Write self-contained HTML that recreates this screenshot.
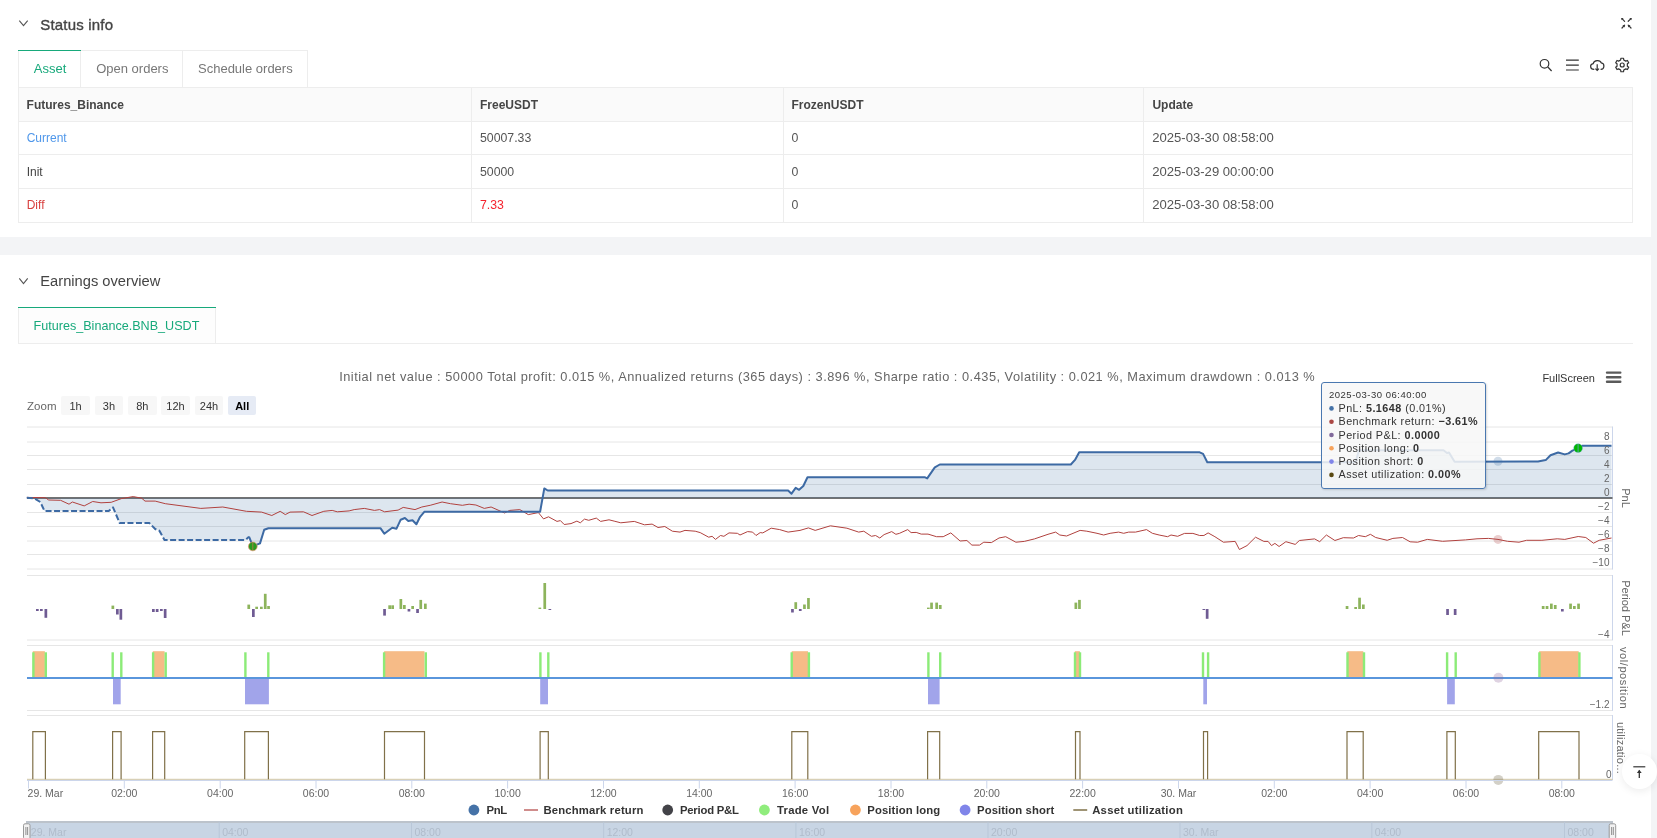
<!DOCTYPE html><html><head><meta charset="utf-8"><style>
html,body{margin:0;padding:0;width:1657px;height:838px;overflow:hidden;background:#fff;}
body{position:relative;font-family:"Liberation Sans", sans-serif;}
.abs{position:absolute;}
.t{position:absolute;white-space:nowrap;line-height:1;font-family:"Liberation Sans", sans-serif;}
b{font-weight:700}
</style></head><body><div style="position:absolute;left:0;top:0;width:1657px;height:838px;will-change:transform">
<svg class="abs" style="left:0;top:0" width="1657" height="838"><path d="M19.3 20.6 L23.5 25.6 L27.7 20.6" fill="none" stroke="#555" stroke-width="1.1"/><path d="M19.3 278.3 L23.5 283.6 L27.7 278.3" fill="none" stroke="#555" stroke-width="1.1"/><g stroke="#333" stroke-width="1.2" fill="none" stroke-linecap="round"><path d="M1622 18.6 L1624.6 21.3"/><path d="M1631 18.6 L1628.2 21.3"/><path d="M1622 28 L1624.6 25.2"/><path d="M1631 28 L1628.2 25.2"/></g><g fill="#333"><path d="M1621.3 18 L1623.6 18.2 L1621.5 20.3Z"/><path d="M1631.6 18 L1629.3 18.2 L1631.4 20.3Z"/><path d="M1624.9 25 L1622.4 25.3 L1624.7 27.6Z"/><path d="M1628 25 L1630.5 25.3 L1628.2 27.6Z"/></g><g stroke="#333" stroke-width="1.2" fill="none"><circle cx="1544.5" cy="63.8" r="4.3"/><path d="M1547.8 67 L1551.6 71"/><path d="M1566 60.1 H1578.8 M1566 65.1 H1578.8 M1566 70 H1578.8" stroke-width="1.1"/><path d="M1594.3 69.4 C1589.6 69.6 1589.6 64 1593.2 63.6 C1594 59.8 1600.2 59.6 1601.2 62.8 C1605 63.2 1604.8 69.6 1600.6 69.4"/><path d="M1597.2 64.2 V70.4 M1595.4 68.6 L1597.2 70.4 L1599 68.6"/><path d="M1620.65 59.93 L1620.88 58.23 L1623.52 58.23 L1623.75 59.93 L1625.81 61.12 L1627.41 60.47 L1628.72 62.75 L1627.36 63.81 L1627.36 66.19 L1628.72 67.25 L1627.41 69.53 L1625.81 68.88 L1623.75 70.07 L1623.52 71.77 L1620.88 71.77 L1620.65 70.07 L1618.59 68.88 L1616.99 69.53 L1615.68 67.25 L1617.04 66.19 L1617.04 63.81 L1615.68 62.75 L1616.99 60.47 L1618.59 61.12Z" stroke-linejoin="round"/><circle cx="1622.2" cy="65" r="2"/></g></svg><div class="t" style="left:40.2px;top:17.30px;font-size:15px;color:#444;font-weight:400;letter-spacing:0.2px;-webkit-text-stroke:0.35px #444;">Status info</div>
<div class="abs" style="left:18px;top:50px;width:289.5px;height:37px;border:1px solid #ededed;border-bottom:none;box-sizing:border-box;background:#fff"></div><div class="abs" style="left:80px;top:50px;width:1px;height:37px;background:#ededed"></div><div class="abs" style="left:182px;top:50px;width:1px;height:37px;background:#ededed"></div><div class="abs" style="left:18px;top:49.5px;width:62.5px;height:1.6px;background:#17a97b"></div><div class="t" style="left:33.8px;top:61.70px;font-size:13px;color:#17a97b;font-weight:400;">Asset</div>
<div class="t" style="left:96.2px;top:61.70px;font-size:13px;color:#777;font-weight:400;">Open orders</div>
<div class="t" style="left:198px;top:61.70px;font-size:13px;color:#777;font-weight:400;">Schedule orders</div>
<div class="abs" style="left:18px;top:87px;width:1615px;height:136px;border:1px solid #ededed;box-sizing:border-box"></div><div class="abs" style="left:19px;top:88px;width:1613px;height:33px;background:#fafafa"></div><div class="abs" style="left:18px;top:121px;width:1615px;height:1px;background:#ededed"></div><div class="abs" style="left:18px;top:154px;width:1615px;height:1px;background:#ededed"></div><div class="abs" style="left:18px;top:188px;width:1615px;height:1px;background:#ededed"></div><div class="abs" style="left:471px;top:87px;width:1px;height:136px;background:#ededed"></div><div class="abs" style="left:783px;top:87px;width:1px;height:136px;background:#ededed"></div><div class="abs" style="left:1143px;top:87px;width:1px;height:136px;background:#ededed"></div><div class="t" style="left:26.6px;top:98.54px;font-size:12px;color:#464646;font-weight:700;">Futures_Binance</div>
<div class="t" style="left:480px;top:98.54px;font-size:12px;color:#464646;font-weight:700;">FreeUSDT</div>
<div class="t" style="left:791.5px;top:98.54px;font-size:12px;color:#464646;font-weight:700;">FrozenUSDT</div>
<div class="t" style="left:1152.4px;top:98.54px;font-size:12px;color:#464646;font-weight:700;">Update</div>
<div class="t" style="left:26.7px;top:131.84px;font-size:12px;color:#4f97ea;font-weight:400;">Current</div>
<div class="t" style="left:480px;top:131.59px;font-size:12.3px;color:#555;font-weight:400;">50007.33</div>
<div class="t" style="left:791.5px;top:131.59px;font-size:12.3px;color:#555;font-weight:400;">0</div>
<div class="t" style="left:1152.2px;top:130.91px;font-size:13.1px;color:#555;font-weight:400;">2025-03-30 08:58:00</div>
<div class="t" style="left:26.7px;top:165.84px;font-size:12px;color:#444;font-weight:400;">Init</div>
<div class="t" style="left:480px;top:165.59px;font-size:12.3px;color:#555;font-weight:400;">50000</div>
<div class="t" style="left:791.5px;top:165.59px;font-size:12.3px;color:#555;font-weight:400;">0</div>
<div class="t" style="left:1152.2px;top:164.91px;font-size:13.1px;color:#555;font-weight:400;">2025-03-29 00:00:00</div>
<div class="t" style="left:26.7px;top:198.64px;font-size:12px;color:#d8403f;font-weight:400;">Diff</div>
<div class="t" style="left:480px;top:199.19px;font-size:12.3px;color:#f5222d;font-weight:400;">7.33</div>
<div class="t" style="left:791.5px;top:199.19px;font-size:12.3px;color:#555;font-weight:400;">0</div>
<div class="t" style="left:1152.2px;top:197.71px;font-size:13.1px;color:#555;font-weight:400;">2025-03-30 08:58:00</div>
<div class="abs" style="left:0;top:237px;width:1657px;height:18px;background:#f3f4f6"></div><div class="abs" style="left:1651px;top:0;width:6px;height:838px;background:#f3f4f6"></div><div class="t" style="left:40.3px;top:274.36px;font-size:14.7px;color:#444;font-weight:400;">Earnings overview</div>
<div class="abs" style="left:18px;top:343px;width:1615px;height:1px;background:#ededed"></div><div class="abs" style="left:18px;top:307px;width:198px;height:36px;border:1px solid #ededed;border-top:none;border-bottom:none;box-sizing:border-box;background:#fdfdfd"></div><div class="abs" style="left:18px;top:306.7px;width:197.5px;height:1.6px;background:#17a97b"></div><div class="t" style="left:33.5px;top:320.33px;font-size:12.6px;color:#17a97b;font-weight:400;">Futures_Binance.BNB_USDT</div>
<svg class="abs" style="left:0;top:0" width="1657" height="838" shape-rendering="auto"><line x1="27" x2="1612.5" y1="427" y2="427" stroke="#e6e6e6" stroke-width="1"/><line x1="27" x2="1612.5" y1="442" y2="442" stroke="#e6e6e6" stroke-width="1"/><line x1="27" x2="1612.5" y1="455.5" y2="455.5" stroke="#e6e6e6" stroke-width="1"/><line x1="27" x2="1612.5" y1="469.5" y2="469.5" stroke="#e6e6e6" stroke-width="1"/><line x1="27" x2="1612.5" y1="484.5" y2="484.5" stroke="#e6e6e6" stroke-width="1"/><line x1="27" x2="1612.5" y1="512.5" y2="512.5" stroke="#e6e6e6" stroke-width="1"/><line x1="27" x2="1612.5" y1="526.5" y2="526.5" stroke="#e6e6e6" stroke-width="1"/><line x1="27" x2="1612.5" y1="541" y2="541" stroke="#e6e6e6" stroke-width="1"/><line x1="27" x2="1612.5" y1="554.5" y2="554.5" stroke="#e6e6e6" stroke-width="1"/><line x1="27" x2="1612.5" y1="569" y2="569" stroke="#e6e6e6" stroke-width="1"/><line x1="27" x2="1612.5" y1="575.5" y2="575.5" stroke="#e6e6e6" stroke-width="1"/><line x1="27" x2="1612.5" y1="640" y2="640" stroke="#e6e6e6" stroke-width="1"/><line x1="27" x2="1612.5" y1="645.5" y2="645.5" stroke="#e6e6e6" stroke-width="1"/><line x1="27" x2="1612.5" y1="710.5" y2="710.5" stroke="#e6e6e6" stroke-width="1"/><line x1="27" x2="1612.5" y1="715.5" y2="715.5" stroke="#e6e6e6" stroke-width="1"/><line x1="1612.5" x2="1612.5" y1="426.5" y2="569.5" stroke="#ccd6eb" stroke-width="1"/><line x1="1612.5" x2="1612.5" y1="575" y2="640.3" stroke="#ccd6eb" stroke-width="1"/><line x1="1612.5" x2="1612.5" y1="645" y2="710.8" stroke="#ccd6eb" stroke-width="1"/><line x1="1612.5" x2="1612.5" y1="715" y2="780" stroke="#ccd6eb" stroke-width="1"/><line x1="27" x2="1612.5" y1="498" y2="498" stroke="#727272" stroke-width="2"/><path d="M26.8 497.7 L33.5 498.2 L36.0 499.4 L40.3 502.0 L44.5 511.0 L108.7 511.0 L113.0 507.4 L119.7 523.0 L149.3 523.0 L155.2 529.0 L159.4 530.7 L164.5 540.0 L245.6 540.0 L249.0 536.6 L252.8 546.2 L260.0 543.4 L264.2 529.8 L268.4 528.2 L380.4 528.2 L384.3 533.7 L392.2 527.8 L396.5 528.7 L400.7 519.7 L404.9 518.0 L408.3 520.9 L412.5 520.2 L416.4 524.3 L420.1 516.8 L424.3 511.8 L540.1 511.8 L544.3 488.4 L547.7 490.5 L788.1 490.5 L791.5 493.7 L795.7 487.8 L799.1 489.8 L803.3 486.0 L807.5 477.2 L924.6 477.2 L927.2 478.4 L934.8 467.4 L939.8 464.5 L1070.8 464.5 L1075.0 459.9 L1079.2 452.3 L1199.7 452.3 L1203.1 453.9 L1207.3 462.3 L1355.5 462.3 L1359.0 450.3 L1443.5 450.3 L1447.0 453.0 L1449.0 452.5 L1454.6 461.8 L1538.0 461.4 L1545.7 460.1 L1550.5 455.3 L1558.1 452.5 L1564.8 454.4 L1568.6 453.4 L1572.4 450.6 L1578.2 448.3 L1582.0 445.8 L1611.5 445.8 L1611.5 498 L26.8 498 Z" fill="rgba(69,114,167,0.18)" stroke="none"/><path d="M26.8 497.4 L45.3 497.7 L48.7 500.0 L60.6 500.3 L69.0 504.2 L72.4 502.0 L84.2 505.9 L92.7 501.5 L101.0 502.8 L111.2 502.3 L121.4 498.6 L133.2 496.6 L141.7 498.2 L145.0 501.1 L155.2 501.1 L165.3 503.7 L200.8 508.4 L222.8 507.0 L246.4 511.3 L261.6 512.1 L271.8 515.5 L280.2 511.3 L285.3 514.6 L290.0 512.1 L303.5 511.8 L312.0 515.5 L323.8 511.3 L332.2 510.4 L337.3 511.8 L349.1 510.9 L354.2 509.6 L364.3 508.4 L374.5 510.4 L379.6 509.6 L384.6 511.8 L398.1 510.1 L403.2 507.4 L415.0 509.6 L421.8 507.0 L430.2 505.3 L442.1 502.0 L450.5 503.7 L462.4 505.3 L469.1 504.2 L475.9 505.0 L484.3 508.4 L491.1 507.0 L504.6 513.0 L509.7 510.4 L519.8 509.6 L528.3 514.6 L538.4 512.6 L543.5 518.9 L548.5 516.8 L557.0 521.4 L560.4 520.6 L564.2 524.5 L571.0 523.6 L576.9 521.1 L580.3 522.8 L584.5 519.1 L588.7 520.3 L596.3 518.1 L600.6 521.4 L609.0 519.8 L614.1 521.1 L620.8 522.8 L634.3 521.4 L644.5 524.8 L652.1 524.1 L658.0 527.5 L664.8 526.5 L672.4 531.2 L680.0 532.1 L685.0 530.4 L695.2 531.2 L700.2 532.6 L708.7 537.2 L712.1 536.3 L715.5 539.4 L720.5 535.5 L723.9 536.3 L729.0 532.9 L737.4 533.3 L740.0 535.0 L747.6 531.6 L752.6 532.1 L756.0 535.5 L760.2 532.6 L762.8 532.9 L771.2 528.2 L779.7 529.6 L788.1 532.1 L800.0 530.4 L808.4 527.9 L815.2 530.4 L830.4 525.8 L846.9 528.2 L858.7 532.1 L863.8 531.2 L871.4 536.3 L875.6 535.5 L879.8 538.0 L884.1 534.6 L891.7 531.6 L895.9 534.3 L899.3 533.4 L907.7 529.6 L911.1 532.6 L916.2 532.4 L921.2 534.1 L928.0 534.1 L936.5 536.7 L943.2 536.7 L950.8 532.9 L960.1 541.0 L966.9 540.5 L971.9 545.1 L979.5 545.1 L983.8 542.2 L991.4 542.6 L999.0 538.0 L1005.7 536.7 L1015.9 542.2 L1024.3 541.4 L1034.5 538.9 L1048.0 534.3 L1055.6 532.1 L1059.8 535.0 L1066.6 536.0 L1080.1 530.4 L1086.8 531.2 L1097.0 533.3 L1103.7 535.0 L1110.1 533.3 L1118.6 532.1 L1123.7 533.3 L1128.7 532.1 L1135.5 532.1 L1146.5 529.6 L1152.4 533.3 L1159.1 535.0 L1167.6 536.7 L1171.0 535.0 L1177.7 536.3 L1184.5 533.4 L1192.9 533.4 L1199.7 535.5 L1203.9 535.5 L1208.1 532.9 L1214.9 536.7 L1223.4 542.2 L1235.2 541.4 L1239.4 549.5 L1247.0 545.6 L1255.5 537.2 L1263.9 541.4 L1268.1 541.4 L1271.5 545.6 L1274.9 543.4 L1279.1 546.5 L1285.9 541.7 L1295.2 544.4 L1299.4 540.5 L1314.6 538.9 L1319.7 541.7 L1326.4 535.0 L1334.9 540.5 L1343.3 537.7 L1353.5 538.0 L1358.5 535.5 L1365.3 536.7 L1370.4 534.3 L1375.7 537.5 L1387.2 540.3 L1392.9 538.4 L1402.5 537.5 L1410.1 541.8 L1417.7 542.2 L1427.3 539.4 L1442.6 541.3 L1465.5 539.9 L1477.0 538.8 L1488.4 538.4 L1498.0 539.4 L1507.5 541.3 L1519.0 542.2 L1526.6 540.3 L1541.9 540.3 L1557.2 538.8 L1564.8 539.4 L1578.2 536.5 L1585.8 537.5 L1593.5 543.2 L1599.2 540.3 L1611.5 538.0" fill="none" stroke="#b0413e" stroke-width="1" stroke-linejoin="round"/><path d="M26.8 497.7 L33.5 498.2 L36.0 499.4 L40.3 502.0 L44.5 511.0 L108.7 511.0 L113.0 507.4 L119.7 523.0 L149.3 523.0 L155.2 529.0 L159.4 530.7 L164.5 540.0 L245.6 540.0 L249.0 536.6" fill="none" stroke="#3d6aa4" stroke-width="2" stroke-dasharray="6 2.5" stroke-linejoin="round"/><path d="M249.0 536.6 L252.8 546.2 L260.0 543.4 L264.2 529.8 L268.4 528.2 L380.4 528.2 L384.3 533.7 L392.2 527.8 L396.5 528.7 L400.7 519.7 L404.9 518.0 L408.3 520.9 L412.5 520.2 L416.4 524.3 L420.1 516.8 L424.3 511.8 L540.1 511.8 L544.3 488.4 L547.7 490.5 L788.1 490.5 L791.5 493.7 L795.7 487.8 L799.1 489.8 L803.3 486.0 L807.5 477.2 L924.6 477.2 L927.2 478.4 L934.8 467.4 L939.8 464.5 L1070.8 464.5 L1075.0 459.9 L1079.2 452.3 L1199.7 452.3 L1203.1 453.9 L1207.3 462.3 L1355.5 462.3 L1359.0 450.3 L1443.5 450.3 L1447.0 453.0 L1449.0 452.5 L1454.6 461.8 L1538.0 461.4 L1545.7 460.1 L1550.5 455.3 L1558.1 452.5 L1564.8 454.4 L1568.6 453.4 L1572.4 450.6 L1578.2 448.3 L1582.0 445.8 L1611.5 445.8" fill="none" stroke="#3d6aa4" stroke-width="2" stroke-linejoin="round"/><circle cx="1498" cy="461.3" r="4.5" fill="rgba(69,114,167,0.25)"/><circle cx="1498" cy="539.4" r="4.5" fill="rgba(176,65,62,0.25)"/><circle cx="1578.1" cy="448.1" r="4.4" fill="#00b800" stroke="rgba(120,170,230,0.5)" stroke-width="0.8"/><line x1="1578.1" x2="1578.1" y1="444" y2="452" stroke="#5aa0a0" stroke-width="1"/><circle cx="252.8" cy="546.4" r="4.4" fill="#2a9a20" stroke="rgba(240,150,120,0.7)" stroke-width="1"/><line x1="252.8" x2="252.8" y1="542.5" y2="550" stroke="#a08040" stroke-width="1"/><rect x="36" y="609" width="2.7" height="2.0" fill="#6f5b93"/><rect x="40" y="609" width="2.7" height="2.0" fill="#6f5b93"/><rect x="44.5" y="609" width="2.7" height="8.8" fill="#6f5b93"/><rect x="111.5" y="605.6" width="2.7" height="3.4" fill="#8db45c"/><rect x="116" y="609" width="2.7" height="5.5" fill="#6f5b93"/><rect x="119.5" y="609" width="2.7" height="10.7" fill="#6f5b93"/><rect x="152" y="609" width="2.7" height="3.0" fill="#6f5b93"/><rect x="155.8" y="609" width="2.7" height="3.0" fill="#6f5b93"/><rect x="160" y="609" width="2.7" height="2.0" fill="#6f5b93"/><rect x="163.8" y="609" width="2.7" height="9.0" fill="#6f5b93"/><rect x="247.4" y="604.6" width="2.7" height="4.4" fill="#8db45c"/><rect x="252" y="609" width="2.7" height="8.0" fill="#6f5b93"/><rect x="255.3" y="606.7" width="2.7" height="2.3" fill="#8db45c"/><rect x="260" y="606.7" width="2.7" height="2.3" fill="#8db45c"/><rect x="263.9" y="593.8" width="2.7" height="15.2" fill="#8db45c"/><rect x="267.2" y="606" width="2.7" height="3.0" fill="#8db45c"/><rect x="383.2" y="609" width="2.7" height="6.6" fill="#6f5b93"/><rect x="388.3" y="605.3" width="2.7" height="3.7" fill="#8db45c"/><rect x="391.3" y="605.3" width="2.7" height="3.7" fill="#8db45c"/><rect x="399.5" y="599" width="2.7" height="10.0" fill="#8db45c"/><rect x="403" y="605" width="2.7" height="4.0" fill="#8db45c"/><rect x="407.6" y="609" width="2.7" height="2.5" fill="#6f5b93"/><rect x="411.3" y="606" width="2.7" height="3.0" fill="#8db45c"/><rect x="416.2" y="609" width="2.7" height="4.0" fill="#6f5b93"/><rect x="419.4" y="599.9" width="2.7" height="9.1" fill="#8db45c"/><rect x="424" y="603.6" width="2.7" height="5.4" fill="#8db45c"/><rect x="543.4" y="583" width="2.7" height="26.0" fill="#8db45c"/><rect x="538.5" y="607.6" width="2.7" height="1.4" fill="#8db45c"/><rect x="548.5" y="609" width="2.7" height="1.0" fill="#6f5b93"/><rect x="791.1" y="609" width="2.7" height="3.5" fill="#6f5b93"/><rect x="794.4" y="602.2" width="2.7" height="6.8" fill="#8db45c"/><rect x="798.9" y="609" width="2.7" height="2.0" fill="#6f5b93"/><rect x="803.1" y="604.5" width="2.7" height="4.5" fill="#8db45c"/><rect x="807.1" y="598" width="2.7" height="11.0" fill="#8db45c"/><rect x="927" y="607.6" width="2.7" height="1.4" fill="#8db45c"/><rect x="930.2" y="602.6" width="2.7" height="6.4" fill="#8db45c"/><rect x="935.3" y="602.6" width="2.7" height="6.4" fill="#8db45c"/><rect x="938.9" y="605" width="2.7" height="4.0" fill="#8db45c"/><rect x="1074.5" y="602.6" width="2.7" height="6.4" fill="#8db45c"/><rect x="1078.1" y="599.9" width="2.7" height="9.1" fill="#8db45c"/><rect x="1202.5" y="609" width="2.7" height="1.0" fill="#6f5b93"/><rect x="1205.8" y="609" width="2.7" height="9.8" fill="#6f5b93"/><rect x="1345.7" y="606" width="2.7" height="3.0" fill="#8db45c"/><rect x="1354.3" y="607" width="2.7" height="2.0" fill="#8db45c"/><rect x="1358.2" y="597.7" width="2.7" height="11.3" fill="#8db45c"/><rect x="1362" y="604.5" width="2.7" height="4.5" fill="#8db45c"/><rect x="1446.2" y="609" width="2.7" height="6.0" fill="#6f5b93"/><rect x="1453.8" y="609" width="2.7" height="6.0" fill="#6f5b93"/><rect x="1541.8" y="606" width="2.7" height="3.0" fill="#8db45c"/><rect x="1545.7" y="606" width="2.7" height="3.0" fill="#8db45c"/><rect x="1550" y="603.6" width="2.7" height="5.4" fill="#8db45c"/><rect x="1553.9" y="605" width="2.7" height="4.0" fill="#8db45c"/><rect x="1561" y="609" width="2.7" height="2.5" fill="#6f5b93"/><rect x="1569.2" y="603.6" width="2.7" height="5.4" fill="#8db45c"/><rect x="1573" y="606" width="2.7" height="3.0" fill="#8db45c"/><rect x="1577.2" y="603.6" width="2.7" height="5.4" fill="#8db45c"/><rect x="32.8" y="651.2" width="12.1" height="26.9" fill="#f6bb87"/><rect x="152.8" y="651.2" width="11.8" height="26.9" fill="#f6bb87"/><rect x="384.1" y="651.2" width="40.4" height="26.9" fill="#f6bb87"/><rect x="791.7" y="651.2" width="16.3" height="26.9" fill="#f6bb87"/><rect x="1074.8" y="651.2" width="5.1" height="26.9" fill="#f6bb87"/><rect x="1347.3" y="651.2" width="16.0" height="26.9" fill="#f6bb87"/><rect x="1539.1" y="651.2" width="39.6" height="26.9" fill="#f6bb87"/><rect x="113" y="678.1" width="7.7" height="26.2" fill="#a1a4ea"/><rect x="245" y="678.1" width="23.9" height="26.2" fill="#a1a4ea"/><rect x="540.2" y="678.1" width="7.8" height="26.2" fill="#a1a4ea"/><rect x="928" y="678.1" width="11.6" height="26.2" fill="#a1a4ea"/><rect x="1203.3" y="678.1" width="3.7" height="26.2" fill="#a1a4ea"/><rect x="1447.1" y="678.1" width="7.7" height="26.2" fill="#a1a4ea"/><rect x="32.199999999999996" y="652.3" width="2.4" height="25.8" fill="#8ceb78"/><rect x="44.599999999999994" y="652.3" width="2.4" height="25.8" fill="#8ceb78"/><rect x="111.5" y="652.3" width="2.4" height="25.8" fill="#8ceb78"/><rect x="120.1" y="652.3" width="2.4" height="25.8" fill="#8ceb78"/><rect x="151.9" y="652.3" width="2.4" height="25.8" fill="#8ceb78"/><rect x="164.5" y="652.3" width="2.4" height="25.8" fill="#8ceb78"/><rect x="244.20000000000002" y="652.3" width="2.4" height="25.8" fill="#8ceb78"/><rect x="267.1" y="652.3" width="2.4" height="25.8" fill="#8ceb78"/><rect x="382.90000000000003" y="652.3" width="2.4" height="25.8" fill="#8ceb78"/><rect x="424.6" y="652.3" width="2.4" height="25.8" fill="#8ceb78"/><rect x="539.1999999999999" y="652.3" width="2.4" height="25.8" fill="#8ceb78"/><rect x="547.0999999999999" y="652.3" width="2.4" height="25.8" fill="#8ceb78"/><rect x="790.5" y="652.3" width="2.4" height="25.8" fill="#8ceb78"/><rect x="807.6999999999999" y="652.3" width="2.4" height="25.8" fill="#8ceb78"/><rect x="927.1999999999999" y="652.3" width="2.4" height="25.8" fill="#8ceb78"/><rect x="939.0" y="652.3" width="2.4" height="25.8" fill="#8ceb78"/><rect x="1073.8" y="652.3" width="2.4" height="25.8" fill="#8ceb78"/><rect x="1078.8" y="652.3" width="2.4" height="25.8" fill="#8ceb78"/><rect x="1201.8" y="652.3" width="2.4" height="25.8" fill="#8ceb78"/><rect x="1206.8999999999999" y="652.3" width="2.4" height="25.8" fill="#8ceb78"/><rect x="1346.3" y="652.3" width="2.4" height="25.8" fill="#8ceb78"/><rect x="1362.8" y="652.3" width="2.4" height="25.8" fill="#8ceb78"/><rect x="1445.8999999999999" y="652.3" width="2.4" height="25.8" fill="#8ceb78"/><rect x="1454.5" y="652.3" width="2.4" height="25.8" fill="#8ceb78"/><rect x="1538.2" y="652.3" width="2.4" height="25.8" fill="#8ceb78"/><rect x="1578.2" y="652.3" width="2.4" height="25.8" fill="#8ceb78"/><line x1="27" x2="1612.5" y1="678.1" y2="678.1" stroke="#5a96dc" stroke-width="2"/><circle cx="1498.4" cy="677.7" r="5" fill="rgba(150,110,160,0.3)"/><line x1="27" x2="1612.5" y1="779.3" y2="779.3" stroke="#cfc5a5" stroke-width="1"/><path d="M32.8 779.3 V731.6 H45.4 V779.3 M112.6 779.3 V731.6 H121.1 V779.3 M152.6 779.3 V731.6 H164.7 V779.3 M244.7 779.3 V731.6 H268.4 V779.3 M384.5 779.3 V731.6 H424.5 V779.3 M540.1 779.3 V731.6 H548.3 V779.3 M791.8 779.3 V731.6 H807.8 V779.3 M927.6 779.3 V731.6 H939.7 V779.3 M1075.5 779.3 V731.6 H1080 V779.3 M1203.5 779.3 V731.6 H1207.6 V779.3 M1347 779.3 V731.6 H1363.2 V779.3 M1446.9 779.3 V731.6 H1455.3 V779.3 M1538.7 779.3 V731.6 H1579 V779.3 " fill="none" stroke="#807149" stroke-width="1.2"/><circle cx="1498.3" cy="779.9" r="5" fill="rgba(110,100,70,0.3)"/><line x1="27" x2="1612.5" y1="780.5" y2="780.5" stroke="#ccd6eb" stroke-width="1"/><line x1="28.5" x2="28.5" y1="780" y2="788.5" stroke="#ccd6eb" stroke-width="1"/><line x1="124.3" x2="124.3" y1="780" y2="788.5" stroke="#ccd6eb" stroke-width="1"/><line x1="220.2" x2="220.2" y1="780" y2="788.5" stroke="#ccd6eb" stroke-width="1"/><line x1="316.0" x2="316.0" y1="780" y2="788.5" stroke="#ccd6eb" stroke-width="1"/><line x1="411.8" x2="411.8" y1="780" y2="788.5" stroke="#ccd6eb" stroke-width="1"/><line x1="507.6" x2="507.6" y1="780" y2="788.5" stroke="#ccd6eb" stroke-width="1"/><line x1="603.5" x2="603.5" y1="780" y2="788.5" stroke="#ccd6eb" stroke-width="1"/><line x1="699.3" x2="699.3" y1="780" y2="788.5" stroke="#ccd6eb" stroke-width="1"/><line x1="795.1" x2="795.1" y1="780" y2="788.5" stroke="#ccd6eb" stroke-width="1"/><line x1="891.0" x2="891.0" y1="780" y2="788.5" stroke="#ccd6eb" stroke-width="1"/><line x1="986.8" x2="986.8" y1="780" y2="788.5" stroke="#ccd6eb" stroke-width="1"/><line x1="1082.6" x2="1082.6" y1="780" y2="788.5" stroke="#ccd6eb" stroke-width="1"/><line x1="1178.5" x2="1178.5" y1="780" y2="788.5" stroke="#ccd6eb" stroke-width="1"/><line x1="1274.3" x2="1274.3" y1="780" y2="788.5" stroke="#ccd6eb" stroke-width="1"/><line x1="1370.1" x2="1370.1" y1="780" y2="788.5" stroke="#ccd6eb" stroke-width="1"/><line x1="1466.0" x2="1466.0" y1="780" y2="788.5" stroke="#ccd6eb" stroke-width="1"/><line x1="1561.8" x2="1561.8" y1="780" y2="788.5" stroke="#ccd6eb" stroke-width="1"/></svg><div class="t" style="left:27.6px;top:787.91px;font-size:10.5px;color:#666;font-weight:400;">29. Mar</div>
<div class="t" style="left:124.3px;transform:translateX(-50%);top:787.91px;font-size:10.5px;color:#666;font-weight:400;">02:00</div>
<div class="t" style="left:220.2px;transform:translateX(-50%);top:787.91px;font-size:10.5px;color:#666;font-weight:400;">04:00</div>
<div class="t" style="left:316.0px;transform:translateX(-50%);top:787.91px;font-size:10.5px;color:#666;font-weight:400;">06:00</div>
<div class="t" style="left:411.8px;transform:translateX(-50%);top:787.91px;font-size:10.5px;color:#666;font-weight:400;">08:00</div>
<div class="t" style="left:507.6px;transform:translateX(-50%);top:787.91px;font-size:10.5px;color:#666;font-weight:400;">10:00</div>
<div class="t" style="left:603.5px;transform:translateX(-50%);top:787.91px;font-size:10.5px;color:#666;font-weight:400;">12:00</div>
<div class="t" style="left:699.3px;transform:translateX(-50%);top:787.91px;font-size:10.5px;color:#666;font-weight:400;">14:00</div>
<div class="t" style="left:795.1px;transform:translateX(-50%);top:787.91px;font-size:10.5px;color:#666;font-weight:400;">16:00</div>
<div class="t" style="left:891.0px;transform:translateX(-50%);top:787.91px;font-size:10.5px;color:#666;font-weight:400;">18:00</div>
<div class="t" style="left:986.8px;transform:translateX(-50%);top:787.91px;font-size:10.5px;color:#666;font-weight:400;">20:00</div>
<div class="t" style="left:1082.6px;transform:translateX(-50%);top:787.91px;font-size:10.5px;color:#666;font-weight:400;">22:00</div>
<div class="t" style="left:1178.5px;transform:translateX(-50%);top:787.91px;font-size:10.5px;color:#666;font-weight:400;">30. Mar</div>
<div class="t" style="left:1274.3px;transform:translateX(-50%);top:787.91px;font-size:10.5px;color:#666;font-weight:400;">02:00</div>
<div class="t" style="left:1370.1px;transform:translateX(-50%);top:787.91px;font-size:10.5px;color:#666;font-weight:400;">04:00</div>
<div class="t" style="left:1466.0px;transform:translateX(-50%);top:787.91px;font-size:10.5px;color:#666;font-weight:400;">06:00</div>
<div class="t" style="left:1561.8px;transform:translateX(-50%);top:787.91px;font-size:10.5px;color:#666;font-weight:400;">08:00</div>
<div class="t" style="left:339.2px;top:370.96px;font-size:12.8px;color:#666;font-weight:400;letter-spacing:0.5px;">Initial net value : 50000 Total profit: 0.015 %, Annualized returns (365 days) : 3.896 %, Sharpe ratio : 0.435, Volatility : 0.021 %, Maximum drawdown : 0.013 %</div>
<div class="t" style="left:1542.4px;top:372.69px;font-size:11px;color:#333;font-weight:400;">FullScreen</div>
<svg class="abs" style="left:0;top:0" width="1657" height="838"><path d="M1607 372.6 H1620.3 M1607 377.3 H1620.3 M1607 381.8 H1620.3" stroke="#5a5a5a" stroke-width="2.4" stroke-linecap="round"/></svg><div class="t" style="left:27.1px;top:400.87px;font-size:11.5px;color:#666;font-weight:400;">Zoom</div>
<div class="abs" style="left:61.3px;top:396.1px;width:28.6px;height:19.3px;background:#f7f7f7;border-radius:2px"></div><div class="t" style="left:75.6px;transform:translateX(-50%);top:401.09px;font-size:11px;color:#333;font-weight:400;">1h</div>
<div class="abs" style="left:94.6px;top:396.1px;width:28.6px;height:19.3px;background:#f7f7f7;border-radius:2px"></div><div class="t" style="left:108.9px;transform:translateX(-50%);top:401.09px;font-size:11px;color:#333;font-weight:400;">3h</div>
<div class="abs" style="left:128px;top:396.1px;width:28.6px;height:19.3px;background:#f7f7f7;border-radius:2px"></div><div class="t" style="left:142.3px;transform:translateX(-50%);top:401.09px;font-size:11px;color:#333;font-weight:400;">8h</div>
<div class="abs" style="left:161.2px;top:396.1px;width:28.6px;height:19.3px;background:#f7f7f7;border-radius:2px"></div><div class="t" style="left:175.5px;transform:translateX(-50%);top:401.09px;font-size:11px;color:#333;font-weight:400;">12h</div>
<div class="abs" style="left:194.7px;top:396.1px;width:28.6px;height:19.3px;background:#f7f7f7;border-radius:2px"></div><div class="t" style="left:209.0px;transform:translateX(-50%);top:401.09px;font-size:11px;color:#333;font-weight:400;">24h</div>
<div class="abs" style="left:227.9px;top:396.1px;width:28.6px;height:19.3px;background:#e6ebf5;border-radius:2px"></div><div class="t" style="left:242.2px;transform:translateX(-50%);top:401.09px;font-size:11px;color:#000;font-weight:700;">All</div>
<div class="t" style="right:47.5px;top:431.74px;font-size:10px;color:#666;font-weight:400;">8</div>
<div class="t" style="right:47.5px;top:445.78px;font-size:10px;color:#666;font-weight:400;">6</div>
<div class="t" style="right:47.5px;top:459.81px;font-size:10px;color:#666;font-weight:400;">4</div>
<div class="t" style="right:47.5px;top:473.86px;font-size:10px;color:#666;font-weight:400;">2</div>
<div class="t" style="right:47.5px;top:487.90px;font-size:10px;color:#666;font-weight:400;">0</div>
<div class="t" style="right:47.5px;top:501.94px;font-size:10px;color:#666;font-weight:400;">−2</div>
<div class="t" style="right:47.5px;top:515.97px;font-size:10px;color:#666;font-weight:400;">−4</div>
<div class="t" style="right:47.5px;top:530.01px;font-size:10px;color:#666;font-weight:400;">−6</div>
<div class="t" style="right:47.5px;top:544.05px;font-size:10px;color:#666;font-weight:400;">−8</div>
<div class="t" style="right:47.5px;top:558.09px;font-size:10px;color:#666;font-weight:400;">−10</div>
<div class="t" style="right:47.5px;top:629.83px;font-size:10px;color:#666;font-weight:400;">−4</div>
<div class="t" style="right:47.5px;top:700.03px;font-size:10px;color:#666;font-weight:400;">−1.2</div>
<div class="t" style="right:45.5px;top:769.53px;font-size:10px;color:#666;font-weight:400;">0</div>
<div class="t" style="left:1624.5px;top:498.3px;font-size:11px;color:#666;transform:translate(-50%,-50%) rotate(90deg);transform-origin:center">PnL</div>
<div class="t" style="left:1625px;top:607.8px;font-size:11px;color:#666;transform:translate(-50%,-50%) rotate(90deg);transform-origin:center">Period P&amp;L</div>
<div class="t" style="left:1622.8px;top:677.6px;font-size:11px;letter-spacing:0.6px;color:#666;transform:translate(-50%,-50%) rotate(90deg);transform-origin:center">vol/position</div>
<div class="t" style="left:1620.3px;top:748.2px;font-size:11px;letter-spacing:0.25px;color:#666;transform:translate(-50%,-50%) rotate(90deg);transform-origin:center">utilizatio...</div>
<svg class="abs" style="left:0;top:0" width="1657" height="838"><circle cx="473.9" cy="810" r="5.4" fill="#4572a7"/><line x1="524" x2="538" y1="810" y2="810" stroke="#b0413e" stroke-width="1.2"/><circle cx="667.7" cy="810" r="5.4" fill="#434348"/><circle cx="764.4" cy="810" r="5.4" fill="#90ed7d"/><circle cx="855.4" cy="810" r="5.4" fill="#f7a35c"/><circle cx="965.1" cy="810" r="5.4" fill="#8085e9"/><line x1="1073.3" x2="1087.2" y1="810" y2="810" stroke="#7f7047" stroke-width="1.5"/></svg><div class="t" style="left:486.5px;top:804.63px;font-size:11.3px;color:#333;font-weight:700;letter-spacing:-0.4px;">PnL</div>
<div class="t" style="left:543.4px;top:804.63px;font-size:11.3px;color:#333;font-weight:700;letter-spacing:0.18px;">Benchmark return</div>
<div class="t" style="left:679.9px;top:804.63px;font-size:11.3px;color:#333;font-weight:700;letter-spacing:-0.2px;">Period P&amp;L</div>
<div class="t" style="left:777px;top:804.63px;font-size:11.3px;color:#333;font-weight:700;letter-spacing:0.25px;">Trade Vol</div>
<div class="t" style="left:867.3px;top:804.63px;font-size:11.3px;color:#333;font-weight:700;letter-spacing:0.1px;">Position long</div>
<div class="t" style="left:977px;top:804.63px;font-size:11.3px;color:#333;font-weight:700;letter-spacing:0.1px;">Position short</div>
<div class="t" style="left:1092.2px;top:804.63px;font-size:11.3px;color:#333;font-weight:700;letter-spacing:0.25px;">Asset utilization</div>
<div class="abs" style="left:26px;top:821px;width:1586.5px;height:17px;background:#c8d5e4;border-top:2px solid #bcc3cb;box-sizing:border-box"></div><svg class="abs" style="left:0;top:0" width="1657" height="838"><line x1="219.2" x2="219.2" y1="822" y2="838" stroke="#b9c7d8" stroke-width="1"/><line x1="411.5" x2="411.5" y1="822" y2="838" stroke="#b9c7d8" stroke-width="1"/><line x1="603.7" x2="603.7" y1="822" y2="838" stroke="#b9c7d8" stroke-width="1"/><line x1="795.9" x2="795.9" y1="822" y2="838" stroke="#b9c7d8" stroke-width="1"/><line x1="988" x2="988" y1="822" y2="838" stroke="#b9c7d8" stroke-width="1"/><line x1="1180" x2="1180" y1="822" y2="838" stroke="#b9c7d8" stroke-width="1"/><line x1="1371.8" x2="1371.8" y1="822" y2="838" stroke="#b9c7d8" stroke-width="1"/><line x1="1564.5" x2="1564.5" y1="822" y2="838" stroke="#b9c7d8" stroke-width="1"/><rect x="23.5" y="823.8" width="6.5" height="15" rx="1.5" fill="#f2f2f2" stroke="#999" stroke-width="1"/><path d="M25.9 827 V835 M27.6 827 V835" stroke="#777" stroke-width="0.8"/><rect x="1609.2" y="823.8" width="6.5" height="15" rx="1.5" fill="#f2f2f2" stroke="#999" stroke-width="1"/><path d="M1611.6 827 V835 M1613.3 827 V835" stroke="#777" stroke-width="0.8"/></svg><div class="t" style="left:30.8px;top:826.81px;font-size:10.5px;color:#b0bccb;font-weight:400;">29. Mar</div>
<div class="t" style="left:222.2px;top:826.81px;font-size:10.5px;color:#b0bccb;font-weight:400;">04:00</div>
<div class="t" style="left:414.5px;top:826.81px;font-size:10.5px;color:#b0bccb;font-weight:400;">08:00</div>
<div class="t" style="left:606.7px;top:826.81px;font-size:10.5px;color:#b0bccb;font-weight:400;">12:00</div>
<div class="t" style="left:798.9px;top:826.81px;font-size:10.5px;color:#b0bccb;font-weight:400;">16:00</div>
<div class="t" style="left:991px;top:826.81px;font-size:10.5px;color:#b0bccb;font-weight:400;">20:00</div>
<div class="t" style="left:1183px;top:826.81px;font-size:10.5px;color:#b0bccb;font-weight:400;">30. Mar</div>
<div class="t" style="left:1374.8px;top:826.81px;font-size:10.5px;color:#b0bccb;font-weight:400;">04:00</div>
<div class="t" style="left:1567.5px;top:826.81px;font-size:10.5px;color:#b0bccb;font-weight:400;">08:00</div>
<div class="abs" style="left:1321.2px;top:382.2px;width:164.6px;height:107px;box-sizing:border-box;border:1px solid #4a78b0;border-radius:3px;background:rgba(247,247,247,0.86);box-shadow:1px 1px 2px rgba(0,0,0,0.15)"></div><div class="t" style="left:1329px;top:389.96px;font-size:9.5px;color:#333;font-weight:400;letter-spacing:0.5px;">2025-03-30 06:40:00</div>
<svg class="abs" style="left:0;top:0" width="1657" height="838"><circle cx="1331.5" cy="408.4" r="2.3" fill="#4572a7"/><circle cx="1331.5" cy="421.7" r="2.3" fill="#aa4643"/><circle cx="1331.5" cy="435.0" r="2.3" fill="#80699b"/><circle cx="1331.5" cy="448.3" r="2.3" fill="#f7a35c"/><circle cx="1331.5" cy="461.6" r="2.3" fill="#8085e9"/><circle cx="1331.5" cy="474.9" r="2.3" fill="#5a4a12"/></svg><div class="t" style="left:1338.5px;top:402.96px;font-size:10.8px;color:#333;font-weight:400;letter-spacing:0.45px;">PnL: <b>5.1648</b> (0.01%)</div>
<div class="t" style="left:1338.5px;top:416.26px;font-size:10.8px;color:#333;font-weight:400;letter-spacing:0.45px;">Benchmark return: <b>−3.61%</b></div>
<div class="t" style="left:1338.5px;top:429.56px;font-size:10.8px;color:#333;font-weight:400;letter-spacing:0.45px;">Period P&amp;L: <b>0.0000</b></div>
<div class="t" style="left:1338.5px;top:442.86px;font-size:10.8px;color:#333;font-weight:400;letter-spacing:0.45px;">Position long: <b>0</b></div>
<div class="t" style="left:1338.5px;top:456.16px;font-size:10.8px;color:#333;font-weight:400;letter-spacing:0.45px;">Position short: <b>0</b></div>
<div class="t" style="left:1338.5px;top:469.46px;font-size:10.8px;color:#333;font-weight:400;letter-spacing:0.45px;">Asset utilization: <b>0.00%</b></div>
<div class="abs" style="left:1621.6px;top:754.1px;width:35px;height:35px;border-radius:50%;background:#fff;box-shadow:0 2px 8px rgba(0,0,0,0.08)"></div><svg class="abs" style="left:0;top:0" width="1657" height="838"><path d="M1633.3 766.8 H1645.3" stroke="#333" stroke-width="1.2"/><path d="M1639.3 770.6 V778" stroke="#333" stroke-width="1.3"/><path d="M1636.9 773 L1639.3 769.8 L1641.7 773Z" fill="#333"/></svg></div></body></html>
